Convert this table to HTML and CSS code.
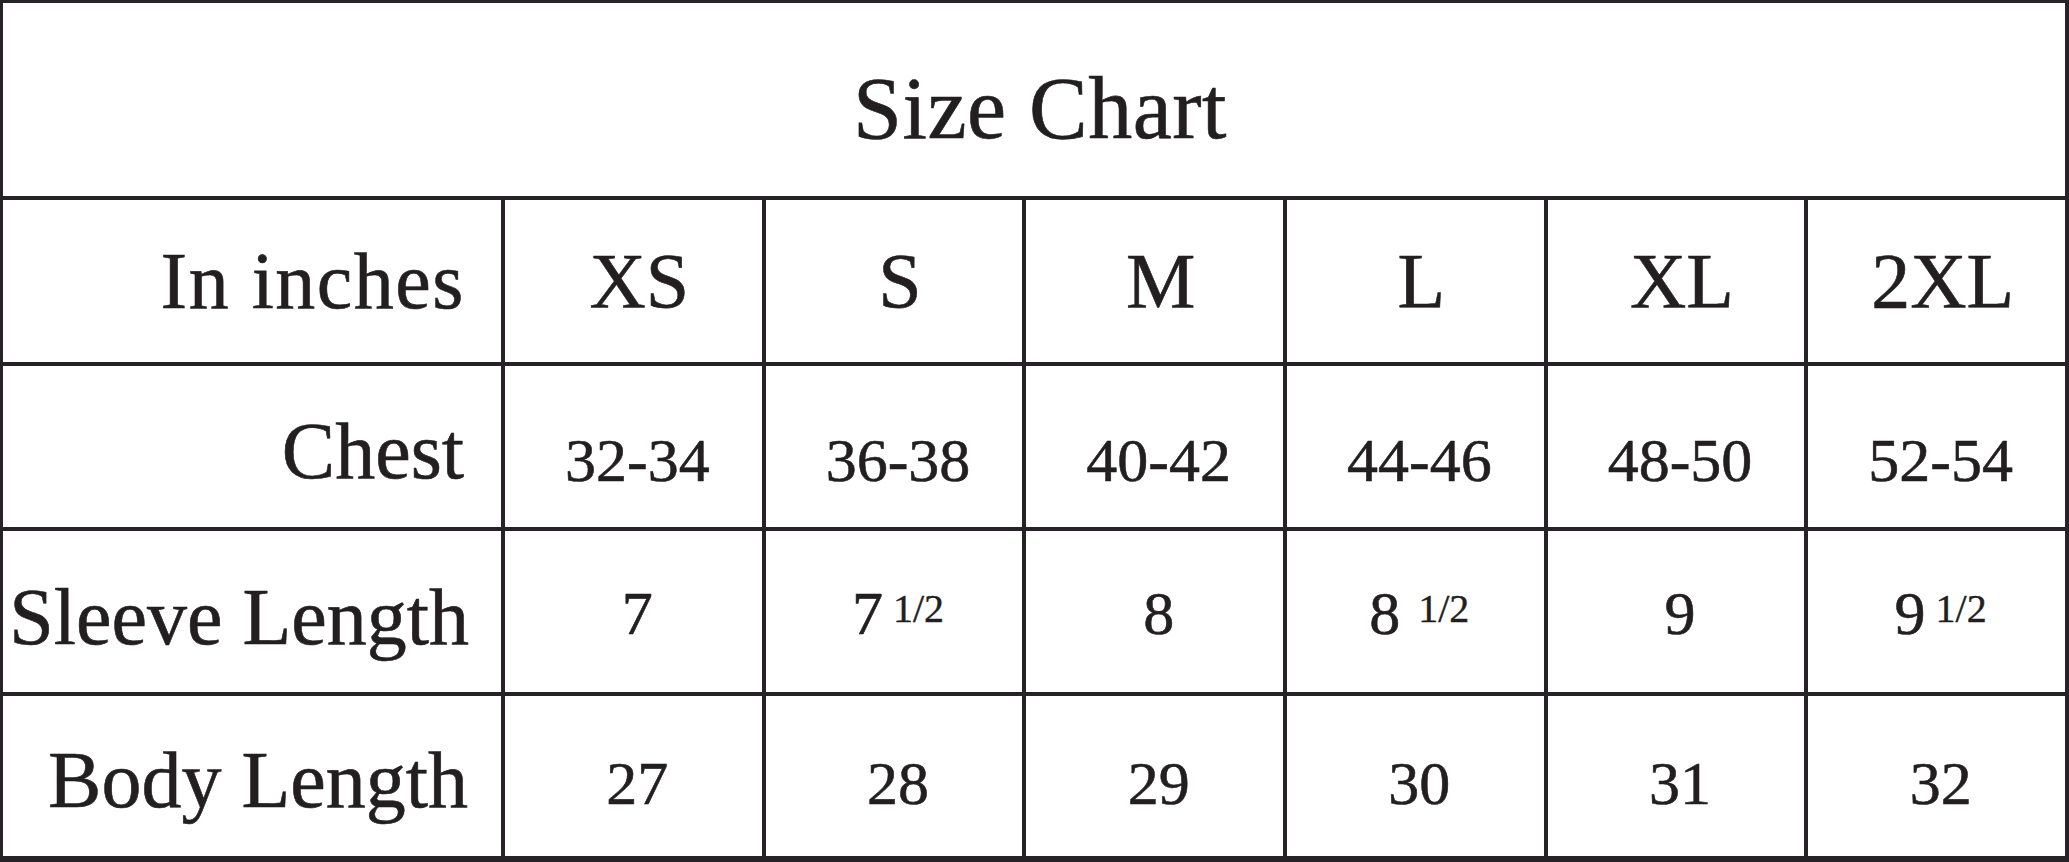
FILE: index.html
```html
<!DOCTYPE html>
<html lang="en">
<head>
<meta charset="utf-8">
<title>Size Chart</title>
<link rel="stylesheet" href="styles.css">
</head>
<body>
<div class="chart" role="table" aria-label="Size Chart">
  <div class="cell title" role="rowheader">Size Chart</div>

  <div class="cell label row-head" role="rowheader">In inches</div>
  <div class="cell size" role="columnheader">XS</div>
  <div class="cell size" role="columnheader">S</div>
  <div class="cell size" role="columnheader">M</div>
  <div class="cell size" role="columnheader">L</div>
  <div class="cell size" role="columnheader">XL</div>
  <div class="cell size" role="columnheader">2XL</div>

  <div class="cell label row-chest" role="rowheader">Chest</div>
  <div class="cell val row-chest" role="cell">32-34</div>
  <div class="cell val row-chest" role="cell">36-38</div>
  <div class="cell val row-chest" role="cell">40-42</div>
  <div class="cell val row-chest" role="cell">44-46</div>
  <div class="cell val row-chest" role="cell">48-50</div>
  <div class="cell val row-chest" role="cell">52-54</div>

  <div class="cell label row-sleeve" role="rowheader">Sleeve Length</div>
  <div class="cell val row-sleeve" role="cell"><span>7</span></div>
  <div class="cell val row-sleeve" role="cell"><span>7<span class="frac">1/2</span></span></div>
  <div class="cell val row-sleeve" role="cell"><span>8</span></div>
  <div class="cell val row-sleeve" role="cell"><span>8<span class="frac wide">1/2</span></span></div>
  <div class="cell val row-sleeve" role="cell"><span>9</span></div>
  <div class="cell val row-sleeve" role="cell"><span>9<span class="frac">1/2</span></span></div>

  <div class="cell label row-body" role="rowheader">Body Length</div>
  <div class="cell val row-body" role="cell">27</div>
  <div class="cell val row-body" role="cell">28</div>
  <div class="cell val row-body" role="cell">29</div>
  <div class="cell val row-body" role="cell">30</div>
  <div class="cell val row-body" role="cell">31</div>
  <div class="cell val row-body" role="cell">32</div>
</div>
</body>
</html>
```

FILE: styles.css
```css
html, body {
  margin: 0;
  padding: 0;
  background: #ffffff;
}

.chart {
  box-sizing: border-box;
  width: 2069px;
  height: 862px;
  display: grid;
  grid-template-columns: 498px repeat(6, 1fr);
  grid-template-rows: 193px 162px 161px 161px 160px;
  gap: 4px;
  padding: 3px 4px 6px 3px;
  background: #262228;
  font-family: "Liberation Serif", "Times New Roman", serif;
  color: #231f20;
}

.cell {
  background: #ffffff;
  display: flex;
  align-items: center;
  justify-content: center;
  line-height: 1;
  box-sizing: border-box;
  white-space: nowrap;
  -webkit-text-stroke: 0.6px #231f20;
}

.title {
  grid-column: 1 / -1;
  font-size: 88px;
  padding-top: 19px;
  padding-left: 12px;
  letter-spacing: 0.5px;
}

.label {
  justify-content: flex-end;
  padding-right: 37px;
  font-size: 80px;
}

.label.row-head {
  letter-spacing: 1.5px;
  padding-right: 36px;
}

.size {
  font-size: 78px;
  padding-left: 12px;
}

.val {
  font-size: 62px;
  padding-left: 8px;
}

.label.row-chest { padding-top: 8px; }
.val.row-chest { padding-top: 26px; }

.label.row-sleeve { padding-top: 10px; padding-right: 32px; }
.val.row-sleeve { padding-top: 2px; }

.label.row-body { padding-top: 8px; padding-right: 33px; }
.val.row-body { padding-top: 14px; }

.frac {
  font-size: 40px;
  vertical-align: 12px;
  margin-left: 10px;
  -webkit-text-stroke: 0.4px #231f20;
}

.frac.wide {
  margin-left: 18px;
}
```
